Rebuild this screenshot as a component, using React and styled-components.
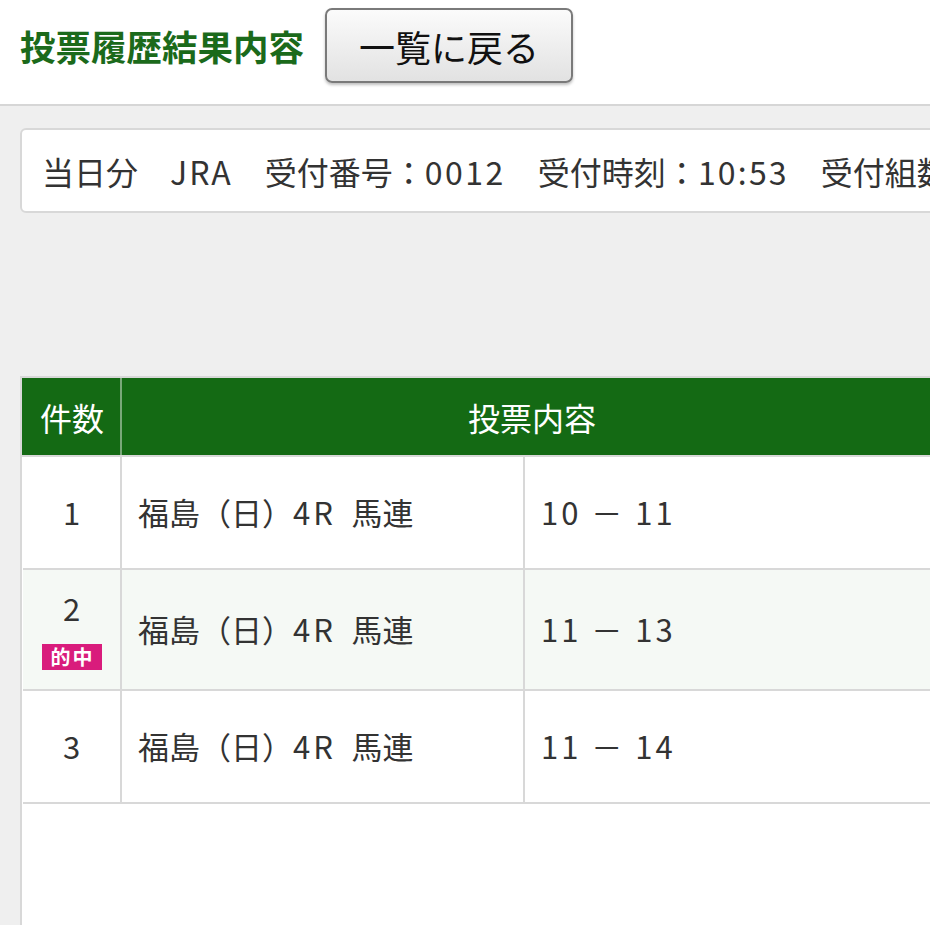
import React from 'react';
import styled, { createGlobalStyle } from 'styled-components';

const GlobalStyle = createGlobalStyle`
  html, body {
    margin: 0;
    padding: 0;
    background: #efefef;
    overflow: hidden;
  }
  body {
    font-family: "Noto Sans CJK JP", "Noto Sans", sans-serif;
    color: #333;
  }
`;

const Page = styled.div`
  width: 1000px;
  min-height: 925px;
`;

const Header = styled.header`
  display: flex;
  align-items: flex-start;
  height: 96px;
  padding: 8px 0 0 20px;
  box-sizing: content-box;
  background: #fff;
  border-bottom: 2px solid #d6d6d6;
`;

const Title = styled.h1`
  margin: 0;
  height: 74px;
  display: flex;
  align-items: center;
  font-size: 35.5px;
  font-weight: bold;
  color: #1b6a1b;
`;

const BackButton = styled.button`
  margin-left: 21px;
  width: 248px;
  height: 75px;
  border: 2px solid #7a7a7a;
  border-radius: 7px;
  background: linear-gradient(#fbfbfb, #e2e2e2);
  box-shadow: 0 2px 3px rgba(0, 0, 0, 0.25);
  font-family: "Noto Sans CJK JP", sans-serif;
  font-size: 36px;
  color: #111;
  padding: 0;
  cursor: pointer;
`;

const Main = styled.main`
  padding: 22px 0 0 20px;
`;

const InfoCard = styled.div`
  display: flex;
  align-items: center;
  height: 81px;
  padding-left: 20px;
  background: #fff;
  border: 2px solid #d8d8d8;
  border-radius: 6px;
  font-size: 32px;
  white-space: nowrap;
  color: #333;
`;

// Latin glyphs run wider in the reference font, so open them up a bit
const Latin = styled.span`
  letter-spacing: ${p => p.$ls || '2.5px'};
`;

const Panel = styled.section`
  margin-top: 163px;
  min-height: 560px;
  background: #fff;
  border-left: 2px solid #d8d8d8;
  border-top: 2px solid #d8d8d8;
`;

const Table = styled.table`
  width: 920px;
  border-collapse: collapse;
  table-layout: fixed;
`;

const Th = styled.th`
  height: 77px;
  padding: 0;
  background: #146a14;
  color: #fff;
  font-size: 32px;
  font-weight: normal;
  border-left: 2px solid ${p => (p.$first ? '#146a14' : '#7aa87a')};
  border-bottom: 2px solid #d8d8d8;
`;

const Tr = styled.tr`
  background: ${p => (p.$hit ? '#f5f9f5' : '#fff')};
  border-bottom: 2px solid #d8d8d8;
`;

const Td = styled.td`
  padding: 18px 16px 19px;
  line-height: 74px;
  font-size: 31px;
  color: #333;
  text-align: ${p => (p.$center ? 'center' : 'left')};
  border-left: ${p => (p.$first ? 'none' : '2px solid #d8d8d8')};
  vertical-align: middle;
  white-space: nowrap;
`;

const NumStack = styled.div`
  display: flex;
  flex-direction: column;
  align-items: center;
  line-height: 40px;
`;

const HitBadge = styled.span`
  margin-top: 16px;
  width: 60px;
  height: 26px;
  line-height: 26px;
  background: #d91c7c;
  color: #fff;
  font-size: 20px;
  font-weight: bold;
  letter-spacing: 2px;
  text-indent: 2px;
`;

const rows = [
  { no: 1, bet: '10 － 11', hit: false },
  { no: 2, bet: '11 － 13', hit: true },
  { no: 3, bet: '11 － 14', hit: false },
];

export default function App() {
  return (
    <Page>
      <GlobalStyle />
      <Header>
        <Title>投票履歴結果内容</Title>
        <BackButton type="button">一覧に戻る</BackButton>
      </Header>
      <Main>
        <InfoCard>
          当日分　<Latin $ls="2px">JRA</Latin>　受付番号：<Latin>0012</Latin>　受付時刻：<Latin $ls="2.2px">10:53</Latin>　受付組数：<Latin>3</Latin>
        </InfoCard>
        <Panel>
          <Table>
            <colgroup>
              <col style={{ width: 98 }} />
              <col style={{ width: 403 }} />
              <col />
            </colgroup>
            <thead>
              <tr>
                <Th $first>件数</Th>
                <Th colSpan={2}>投票内容</Th>
              </tr>
            </thead>
            <tbody>
              {rows.map(r => (
                <Tr key={r.no} $hit={r.hit}>
                  <Td $first $center>
                    {r.hit ? (
                      <NumStack>
                        {r.no}
                        <HitBadge>的中</HitBadge>
                      </NumStack>
                    ) : (
                      r.no
                    )}
                  </Td>
                  <Td>
                    福島（日）<Latin $ls="3px">4R</Latin>{'\u2002'}馬連
                  </Td>
                  <Td>
                    <Latin $ls="3px">{r.bet}</Latin>
                  </Td>
                </Tr>
              ))}
            </tbody>
          </Table>
        </Panel>
      </Main>
    </Page>
  );
}
